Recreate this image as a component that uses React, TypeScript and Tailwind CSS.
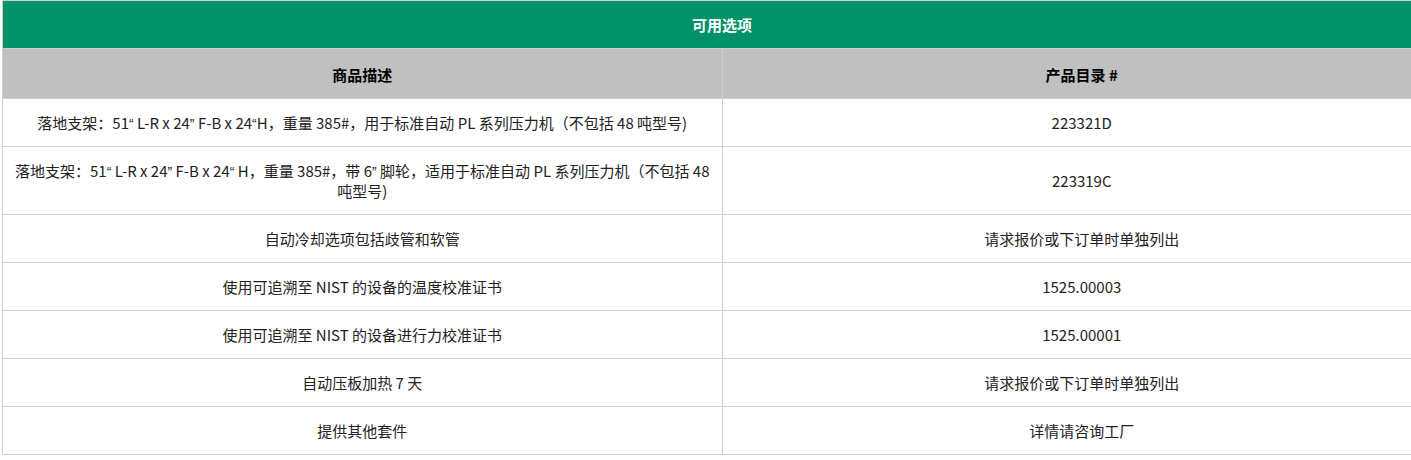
const rows: [string, string][] = [
  ["落地支架：51“ L-R x 24” F-B x 24“H，重量 385#，用于标准自动 PL 系列压力机（不包括 48 吨型号)", "223321D"],
  ["落地支架：51“ L-R x 24” F-B x 24“ H，重量 385#，带 6” 脚轮，适用于标准自动 PL 系列压力机（不包括 48 吨型号)", "223319C"],
  ["自动冷却选项包括歧管和软管", "请求报价或下订单时单独列出"],
  ["使用可追溯至 NIST 的设备的温度校准证书", "1525.00003"],
  ["使用可追溯至 NIST 的设备进行力校准证书", "1525.00001"],
  ["自动压板加热 7 天", "请求报价或下订单时单独列出"],
  ["提供其他套件", "详情请咨询工厂"],
];

// curly quotes in the CJK font are full width; the page shows narrow latin ones
function Text({ value }: { value: string }) {
  return (
    <>
      {value.split(/([“”])/).map((part, i) =>
        part === "“" || part === "”" ? (
          <span key={i} className="font-['Liberation_Sans'] text-[14px] leading-none">
            {part}
          </span>
        ) : (
          part
        )
      )}
    </>
  );
}

export default function App() {
  return (
    <div className="h-[460px] w-[1411px] overflow-hidden bg-white font-['Noto_Sans_CJK_SC','Liberation_Sans',sans-serif] text-[15px] leading-[20px] text-[#222]">
      <table className="ml-[2px] w-[1440px] table-fixed border-collapse border border-[#cfcfcf]">
        <thead>
          <tr>
            <th
              colSpan={2}
              className="h-[48px] bg-[#009268] text-center text-[15px] font-bold text-white"
            >
              可用选项
            </th>
          </tr>
          <tr>
            <th className="h-[50px] border border-[#cfcfcf] bg-[#c0c0c0] pt-[2px] text-center font-bold text-black">
              商品描述
            </th>
            <th className="h-[50px] border border-[#cfcfcf] bg-[#c0c0c0] pt-[2px] text-center font-bold text-black">
              产品目录 #
            </th>
          </tr>
        </thead>
        <tbody>
          {rows.map(([desc, code]) => (
            <tr key={desc}>
              <td className="border border-[#cfcfcf] px-[11px] pt-[14px] pb-[13px] text-center">
                <Text value={desc} />
              </td>
              <td className="border border-[#cfcfcf] px-[11px] pt-[14px] pb-[13px] text-center">
                {code}
              </td>
            </tr>
          ))}
        </tbody>
      </table>
    </div>
  );
}
